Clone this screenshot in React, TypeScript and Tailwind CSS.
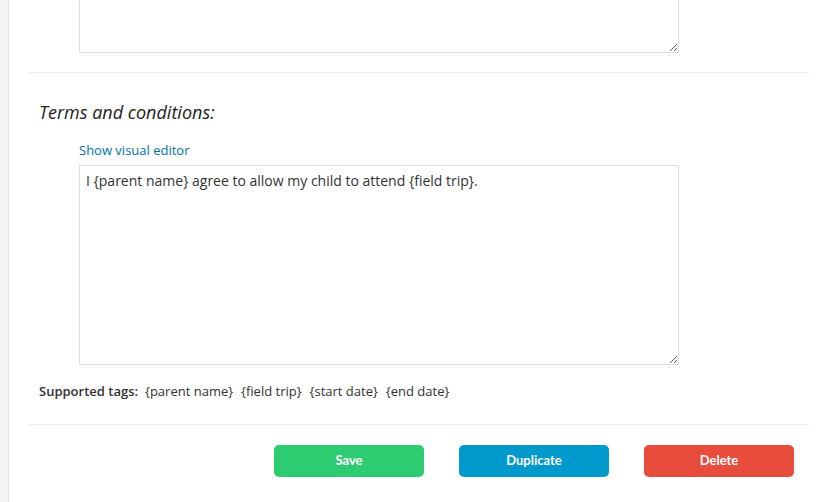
const tags = ['{parent name}', '{field trip}', '{start date}', '{end date}'];

export default function App() {
  return (
    <div className="flex min-h-[502px] bg-white font-['Open_Sans',sans-serif] text-[#333]">
      <div className="w-[9px] shrink-0 border-r border-[#e2e2e2] bg-[#f3f3f3]" />
      <div className="flex-1 pl-[20px] pr-[20px]">
        <div className="pl-[50px]">
          <textarea
            className="block h-[53px] w-[600px] border border-t-0 border-[#dddddd] bg-white outline-none"
            defaultValue=""
          />
        </div>
        <div className="mt-[19px] border-t border-[#ececec]" />

        <h3 className="mt-[17px] pl-[10px] text-[18px] italic leading-[44px] text-[#222]">
          Terms and conditions:
        </h3>

        <div className="pl-[50px]">
          <a href="#" className="mt-[7px] block text-[13px] leading-[18px] text-[#0073aa]">
            Show visual editor
          </a>
          <textarea
            className="mt-[6px] block h-[200px] w-[600px] border border-[#dddddd] bg-white px-[6px] py-[5px] text-[14px] leading-[20px] text-[#333] outline-none"
            defaultValue="I {parent name} agree to allow my child to attend {field trip}."
          />
        </div>

        <div className="mt-[17px] flex items-center pl-[10px] text-[13px] leading-[18px] text-[#333]">
          <span className="mr-[7px] font-semibold">Supported tags:</span>
          <div className="flex gap-[8px]">
            {tags.map(tag => (
              <span key={tag}>{tag}</span>
            ))}
          </div>
        </div>

        <div className="mt-[24px] border-t border-[#ececec]" />

        <div className="mt-[20px] flex justify-end gap-[35px] pr-[15px]">
          <button className="h-[32px] w-[150px] rounded-[5px] bg-[#2ecc71] font-['Lato',sans-serif] text-[13px] font-bold text-white">
            Save
          </button>
          <button className="h-[32px] w-[150px] rounded-[5px] bg-[#0099cc] font-['Lato',sans-serif] text-[13px] font-bold text-white">
            Duplicate
          </button>
          <button className="h-[32px] w-[150px] rounded-[5px] bg-[#e74c3c] font-['Lato',sans-serif] text-[13px] font-bold text-white">
            Delete
          </button>
        </div>
      </div>
    </div>
  );
}
